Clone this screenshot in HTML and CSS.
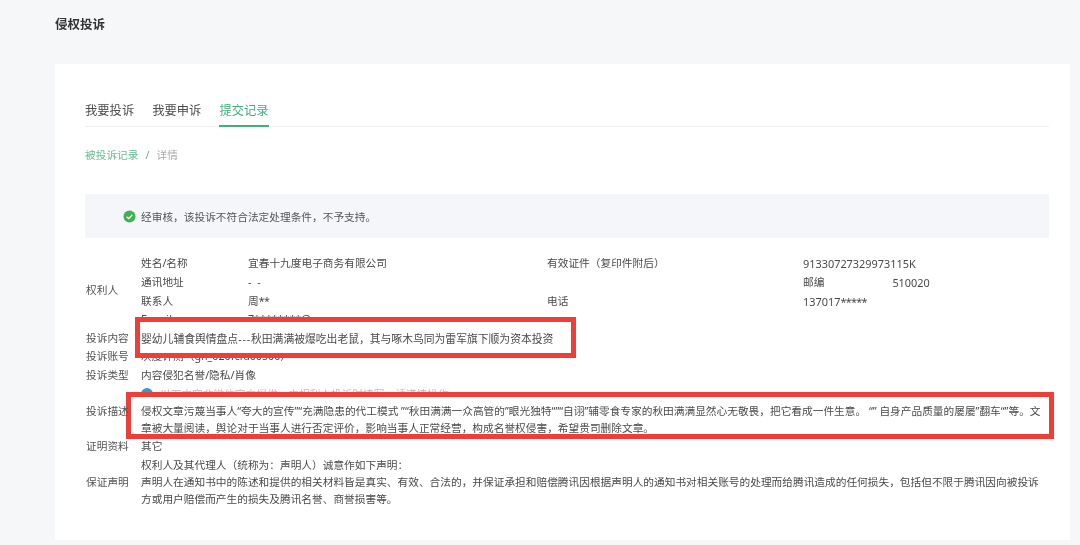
FILE: index.html
```html
<!DOCTYPE html>
<html lang="zh-CN">
<head>
<meta charset="utf-8">
<title>侵权投诉</title>
<link rel="stylesheet" href="styles.css">
</head>
<body>
<main class="page">
  <h1 class="title">侵权投诉</h1>
  <section class="card">
    <nav class="tabs">
      <a class="tab">我要投诉</a>
      <a class="tab">我要申诉</a>
      <a class="tab active">提交记录</a>
    </nav>
    <div class="crumbs"><a class="crumb-link">被投诉记录</a><span class="crumb-sep">/</span><span class="crumb-cur">详情</span></div>
    <div class="alert">
      <svg class="alert-icon" viewBox="0 0 14 14"><circle cx="7" cy="7" r="6.5" fill="#3fb24f"/><path d="M3.9 7.2l2.2 2.1 4-4.1" fill="none" stroke="#fff" stroke-width="1.5"/></svg>
      <span>经审核，该投诉不符合法定处理条件，不予支持。</span>
    </div>
    <div class="details">
      <div class="red-box box-one"></div>
      <div class="red-box box-two"></div>
      <div class="row">
        <div class="label">权利人</div>
        <div class="party">
          <span>姓名/名称</span><span>宜春十九度电子商务有限公司</span><span>有效证件（复印件附后）</span><span class="latin">91330727329973115K</span>
          <span>通讯地址</span><span class="spaced">- -</span><span></span><span class="zip"><span>邮编</span><span class="latin">510020</span></span>
          <span>联系人</span><span>周<span class="mask">**</span></span><span>电话</span><span class="latin">137017<span class="mask">*****</span></span>
          <span>E-mail</span><span>7********@qq.com</span><span></span><span></span>
        </div>
      </div>
      <div class="row lifted">
        <div class="label">投诉内容</div>
        <div class="value wide">婴幼儿辅食舆情盘点<span class="dash">---</span>秋田满满被爆吃出老鼠，其与啄木鸟同为雷军旗下顺为资本投资</div>
      </div>
      <div class="row">
        <div class="label">投诉账号</div>
        <div class="value">灰度评测（gh_020fcfd00500）</div>
      </div>
      <div class="row">
        <div class="label">投诉类型</div>
        <div class="value">内容侵犯名誉/隐私/肖像</div>
      </div>
      <div class="row">
        <div class="label"></div>
        <div class="value notice">
          <svg class="notice-icon" viewBox="0 0 12 12"><circle cx="6" cy="6" r="6" fill="#2f9bd8"/></svg>
          <span>以下内容非微信官方提供，由权利人投诉时填写，请谨慎操作</span>
        </div>
      </div>
      <div class="row lifted row-desc">
        <div class="label">投诉描述</div>
        <div class="value">侵权文章污蔑当事人“夸大的宣传”“充满隐患的代工模式 ”“秋田满满一众高管的”眼光独特“”“自诩”辅零食专家的秋田满满显然心无敬畏，把它看成一件生意。 “” 自身产品质量的屡屡”翻车“”等。文章被大量阅读，舆论对于当事人进行否定评价，影响当事人正常经营，构成名誉权侵害，希望贵司删除文章。</div>
      </div>
      <div class="row">
        <div class="label">证明资料</div>
        <div class="value">其它</div>
      </div>
      <div class="row">
        <div class="label">保证声明</div>
        <div class="value">权利人及其代理人（统称为：声明人）诚意作如下声明：<br>声明人在通知书中的陈述和提供的相关材料皆是真实、有效、合法的，并保证承担和赔偿腾讯因根据声明人的通知书对相关账号的处理而给腾讯造成的任何损失，包括但不限于腾讯因向被投诉方或用户赔偿而产生的损失及腾讯名誉、商誉损害等。</div>
      </div>
    </div>
  </section>
</main>
</body>
</html>
```
FILE: styles.css
```css
* { box-sizing: border-box; }
html, body { margin: 0; height: 100%; }
body {
  background: #f6f7f9;
  color: #4a4a4a;
  font-family: "Noto Sans", "Noto Sans CJK SC", sans-serif;
  font-size: 10.7px;
  overflow: hidden;
}
.page { padding: 16px 10px 0 55px; filter: blur(0.3px); }
.title {
  margin: 0 0 30px;
  font-size: 12.5px;
  line-height: 18px;
  font-weight: 700;
  color: #333;
}
.card {
  background: #fff;
  height: 476px;
  padding: 35px 21px 0 30px;
}
.tabs {
  display: flex;
  gap: 18px;
  height: 28px;
  border-bottom: 1px solid #eeeff1;
}
.tab {
  height: 28px;
  font-size: 12.3px;
  line-height: 23px;
  color: #4d4d4d;
}
.tab.active { color: #3fb27a; border-bottom: 2px solid #3fb27a; }
.crumbs {
  display: flex;
  align-items: center;
  gap: 7px;
  margin-top: 20px;
  line-height: 16px;
}
.crumb-link { color: #62bd92; }
.crumb-sep { color: #7f9f95; }
.crumb-cur { color: #aaa; }
.alert {
  display: flex;
  align-items: center;
  gap: 5px;
  height: 44px;
  margin-top: 31px;
  padding-left: 38px;
  background: #f4f6f9;
  color: #555;
}
.alert-icon { width: 13px; height: 13px; }
.details {
  position: relative;
  margin-top: 15px;
}
.red-box {
  position: absolute;
  z-index: 1;
  background: #fff;
  border: 5px solid #ee3e38;
}
.box-one { left: 50px; top: 64px; width: 441px; height: 41px; }
.box-two { left: 41px; top: 139px; width: 928px; height: 47px; }
.row {
  display: flex;
  align-items: center;
  padding: 0.85px 0;
  line-height: 17px;
}
.row-desc {
  align-items: flex-start;
  padding: 0 0 1px;
  line-height: 16.5px;
}
.lifted { position: relative; z-index: 2; }
.label { flex: 0 0 56px; padding-left: 1px; color: #555; }
.value { flex: 1; }
.wide { font-size: 10.8px; }
.dash { letter-spacing: 0.8px; }
.party {
  flex: 1;
  display: grid;
  grid-template-columns: 107px 299px 256px 1fr;
  grid-template-rows: 19px 19px 19px 17px;
  align-items: center;
}
.latin { font-size: 10.9px; }
.mask { letter-spacing: -0.7px; }
.spaced { letter-spacing: 1.5px; }
.zip { display: flex; gap: 68px; }
.notice { display: flex; align-items: center; gap: 7px; color: #bbb; }
.notice-icon { width: 12px; height: 12px; }
```
